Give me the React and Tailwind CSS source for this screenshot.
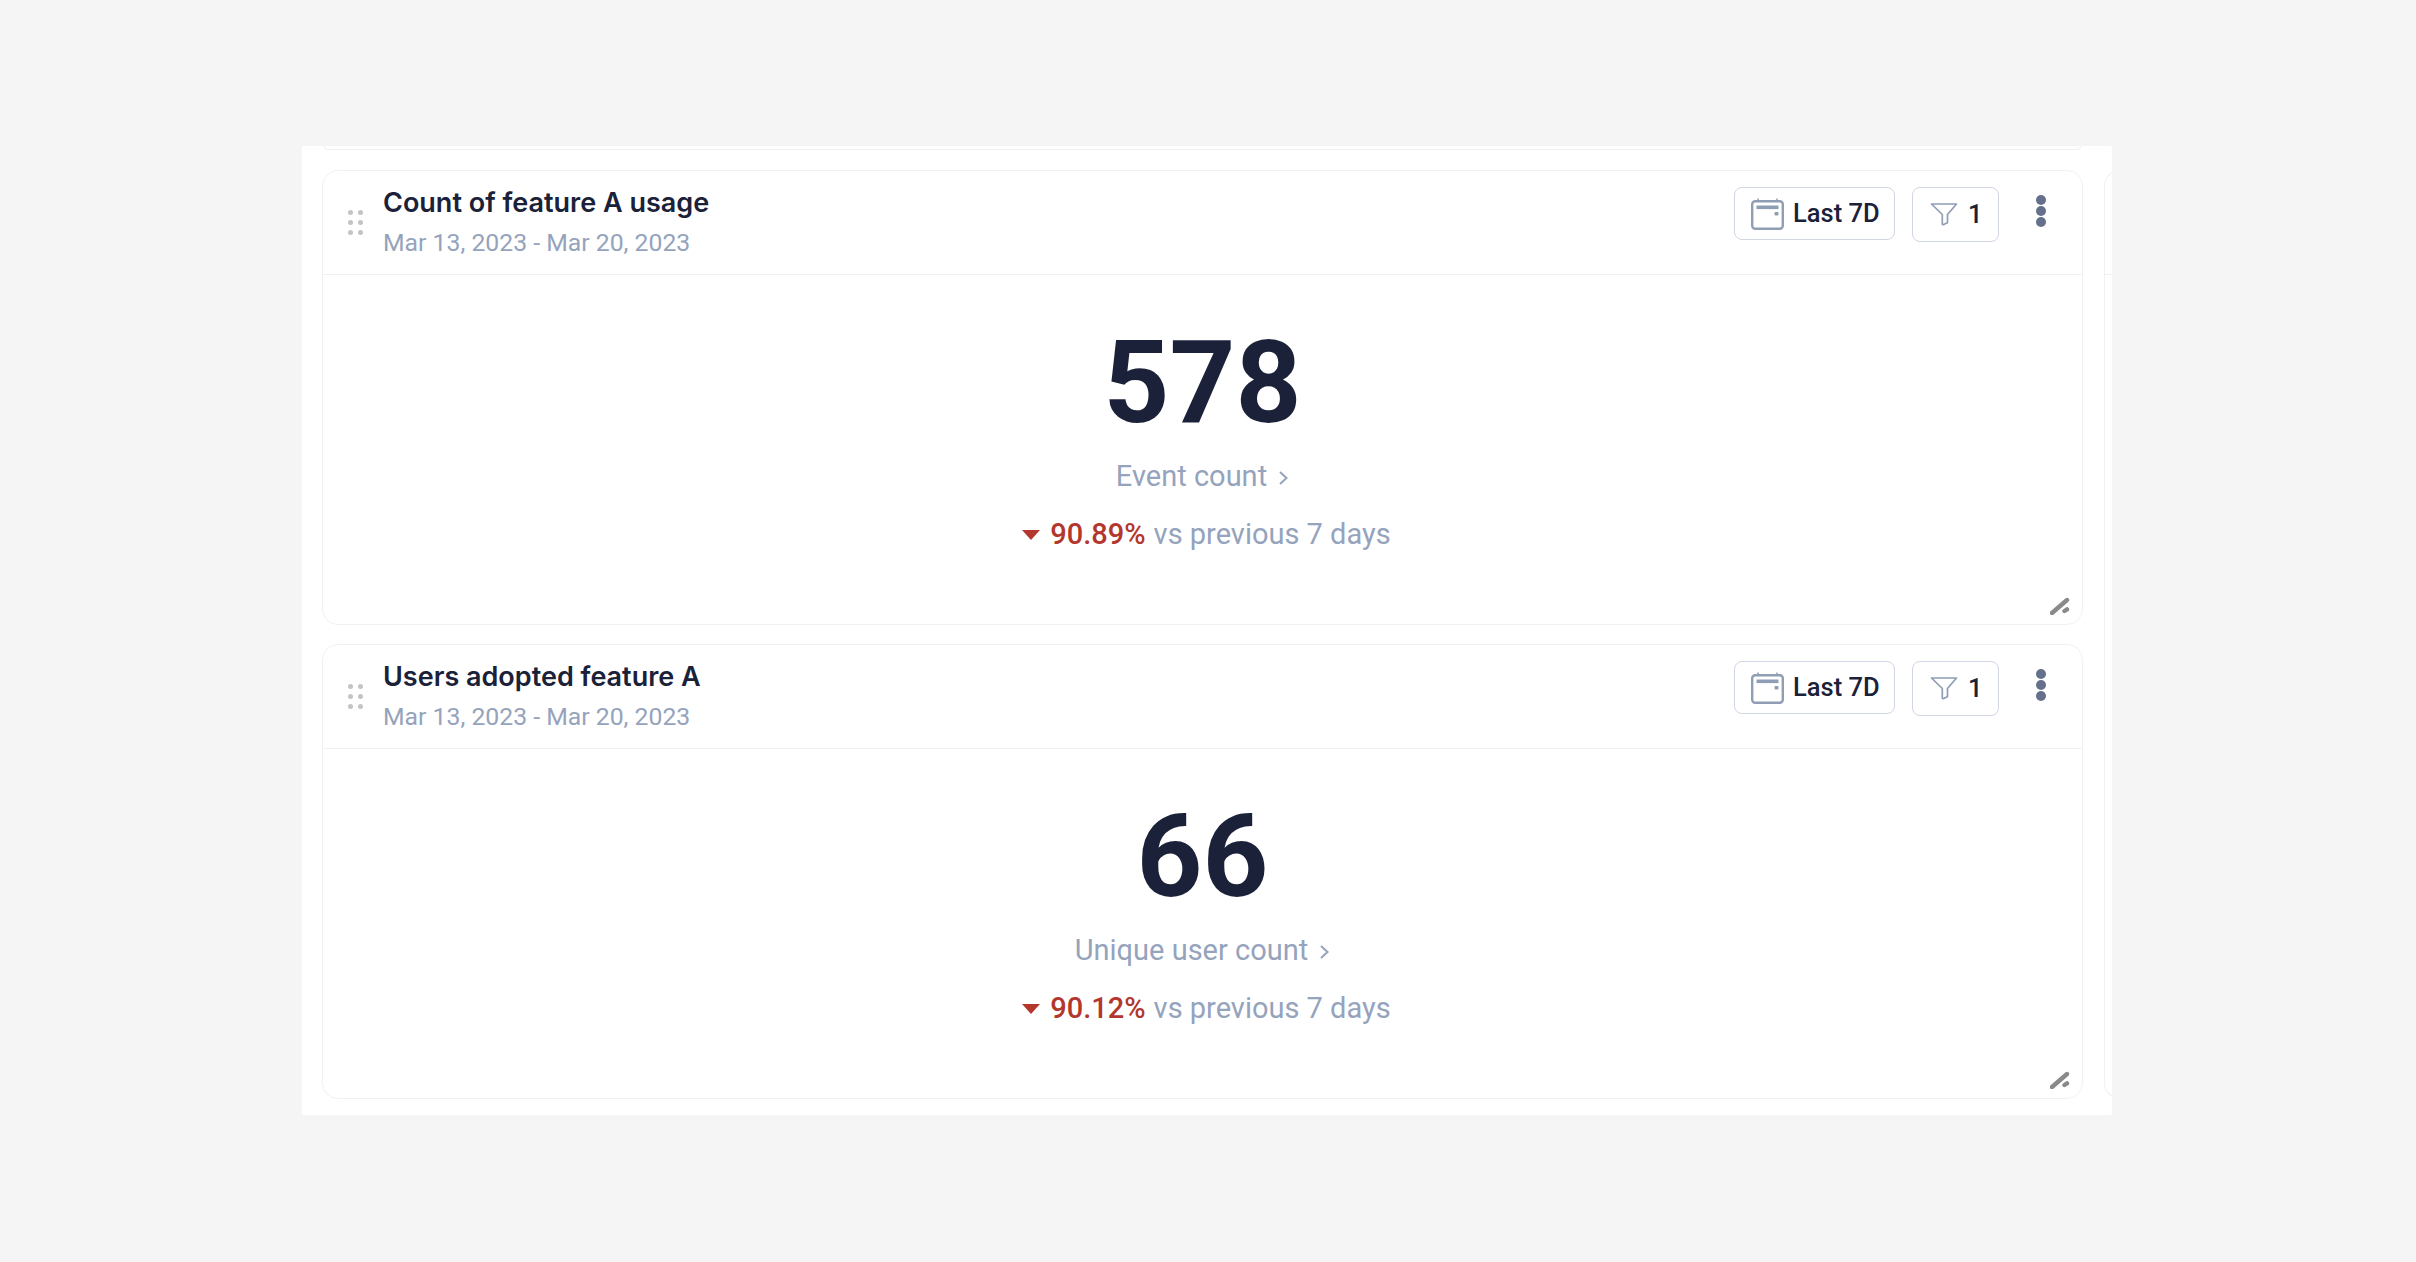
import React from "react";

const CalendarIcon = () => (
  <svg width="33" height="32" viewBox="0 0 33 32" fill="none">
    <rect x="1.2" y="3.2" width="30.6" height="27.6" rx="3" stroke="#8f9db5" strokeWidth="2.4" />
    <path d="M7 .5v3M26 .5v3" stroke="#8f9db5" strokeWidth="1.5" />
    <rect x="5.5" y="7.5" width="22" height="3.6" fill="#8f9db5" />
    <rect x="23.5" y="14" width="4" height="3.5" rx="1" fill="#8f9db5" />
  </svg>
);

const FilterIcon = () => (
  <svg width="28" height="23" viewBox="0 0 28 23" fill="none">
    <path
      d="M1.5 1h25L17.5 11.5v7.6c0 .5-.3.9-.8 1l-3.4 1.6c-.6.2-1-.1-1-.7V11.5L1.5 1z"
      stroke="#8f9db5"
      strokeWidth="1.7"
      strokeLinejoin="round"
    />
  </svg>
);

const DragDots = () => (
  <div className="grid grid-cols-2 gap-[5px] w-[15px] shrink-0">
    {[0, 1, 2, 3, 4, 5].map((i) => (
      <span key={i} className="w-[5px] h-[5px] rounded-full bg-[#c4c4c4]" />
    ))}
  </div>
);

const MoreDots = () => (
  <div className="flex flex-col gap-[1px] w-[10px]">
    {[0, 1, 2].map((i) => (
      <span key={i} className="w-[10px] h-[10px] rounded-full bg-[#64708c]" />
    ))}
  </div>
);

const ResizeHandle = () => (
  <svg className="absolute right-[12px] bottom-[9px]" width="20" height="18" viewBox="0 0 20 18" fill="none">
    <path d="M2 16L17 3" stroke="#8a8a8a" strokeWidth="4.4" strokeLinecap="round" />
    <path d="M14.5 14l2.5-1.6" stroke="#8a8a8a" strokeWidth="4.4" strokeLinecap="round" />
  </svg>
);

const MetricCard = ({ title, value, label, change }) => (
  <div className="relative h-[455px] rounded-[16px] border border-[#f0f1f4] bg-white">
    <div className="flex h-[104px] items-start border-b border-[#eef0f3] pl-[25px] pr-[36px]">
      <div className="self-center">
        <DragDots />
      </div>
      <div className="ml-[20px] pt-[15px]">
        <div className="text-[27px] leading-[34px] font-semibold text-[#1a2138]">{title}</div>
        <div className="mt-[7px] font-['Roboto'] text-[24.75px] leading-[32px] text-[#95a3bc]">Mar 13, 2023 - Mar 20, 2023</div>
      </div>
      <div className="ml-auto flex items-start pt-[16px] font-['Roboto']">
        <button className="flex h-[53px] w-[161px] items-center rounded-[8px] border border-[#d0d6e3] pl-[16px] text-[25.5px] font-medium text-[#1a2138]">
          <CalendarIcon />
          <span className="ml-[9px]">Last 7D</span>
        </button>
        <button className="ml-[17px] flex h-[55px] w-[87px] items-center rounded-[8px] border border-[#d0d6e3] pl-[17px] text-[25.5px] font-medium text-[#1a2138]">
          <FilterIcon />
          <span className="ml-[10px]">1</span>
        </button>
        <div className="ml-[37px] pt-[8px]">
          <MoreDots />
        </div>
      </div>
    </div>
    <div className="flex flex-col items-center font-['Roboto']">
      <div className="mt-[40px] text-[115px] leading-[135px] font-bold text-[#1a2138]">{value}</div>
      <div className="mt-[8px] flex items-center text-[29px] leading-[36px] text-[#95a3bc]">
        {label}
        <svg className="ml-[11px] mt-[3px]" width="11" height="16" viewBox="0 0 11 16" fill="none">
          <path d="M2 2l6.5 6L2 14" stroke="#95a3bc" strokeWidth="2" />
        </svg>
      </div>
      <div className="ml-[8px] mt-[22px] flex items-center text-[29px] leading-[36px] text-[#95a3bc]">
        <svg className="mr-[10px] mt-[2px]" width="18" height="10" viewBox="0 0 18 10">
          <path d="M0 0h18L9 10z" fill="#b3372d" />
        </svg>
        <span className="font-medium text-[#b3372d]">{change}</span>
        <span className="ml-[8px]">vs previous 7 days</span>
      </div>
    </div>
    <ResizeHandle />
  </div>
);

export default function App() {
  return (
    <div className="min-h-[1262px] bg-[#f5f5f5] pt-[146px] pl-[302px] font-['Inter',sans-serif]">
      <div className="flex h-[969px] w-[1810px] overflow-hidden rounded-[2px] bg-white pl-[20px]">
        <div className="w-[1761px] shrink-0">
          {/* bottom edge of the card scrolled above */}
          <div className="h-[4px] rounded-b-[16px] border-x border-b border-[#f0f1f4] mx-[2px]" />
          <div className="mt-[20px] flex flex-col gap-[19px]">
            <MetricCard title="Count of feature A usage" value="578" label="Event count" change="90.89%" />
            <MetricCard title="Users adopted feature A" value="66" label="Unique user count" change="90.12%" />
          </div>
        </div>
        {/* next column peeking in on the right, one tall card */}
        <div className="ml-[21px] w-[40px] shrink-0 pt-[24px]">
          <div className="h-[929px] rounded-l-[16px] border-y border-l border-[#f0f1f4]">
            <div className="h-[104px] border-b border-[#eef0f3]" />
          </div>
        </div>
      </div>
    </div>
  );
}
